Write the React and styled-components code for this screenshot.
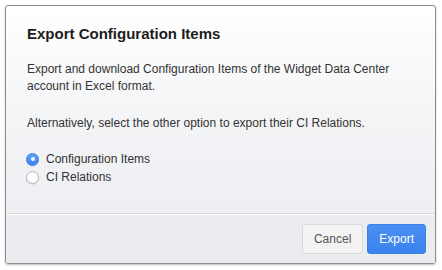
import React, { useState } from 'react';
import styled, { createGlobalStyle } from 'styled-components';

const GlobalStyle = createGlobalStyle`
  html, body {
    margin: 0;
    padding: 0;
    background: #ffffff;
  }
  body {
    font-family: "Liberation Sans", Arial, Helvetica, sans-serif;
    -webkit-font-smoothing: antialiased;
  }
`;

const Page = styled.div`
  padding: 5px 6px 6px 5px;
  width: 442px;
  height: 270px;
  box-sizing: border-box;
`;

const Dialog = styled.div`
  display: flex;
  flex-direction: column;
  height: 259px;
  box-sizing: border-box;
  border: 1px solid #8d8d8d;
  border-radius: 3px;
  background: linear-gradient(to bottom, #ffffff 0%, #f3f4f6 45%, #ebecf0 100%);
  box-shadow: 0 1px 2px rgba(0, 0, 0, 0.25);
  overflow: hidden;
`;

const Body = styled.div`
  flex: 1;
  padding: 18px 21px 0 21px;
  color: #333;
`;

const Title = styled.h2`
  margin: 0 0 17px;
  font-size: 15px;
  font-weight: 700;
  line-height: 20px;
  color: #1c1c1c;
`;

const Paragraph = styled.p`
  margin: 0 0 20px;
  font-size: 12px;
  line-height: 17px;
  color: #333;
`;

const Options = styled.div`
  display: flex;
  flex-direction: column;
  gap: 4px;
`;

const Option = styled.label`
  display: flex;
  align-items: center;
  gap: 7px;
  font-size: 12px;
  line-height: 14px;
  color: #333;
  cursor: pointer;
`;

const Radio = styled.span`
  width: 13px;
  height: 13px;
  margin-left: -1px;
  border-radius: 50%;
  box-sizing: border-box;
  display: flex;
  align-items: center;
  justify-content: center;
  background: ${(p) => (p.checked ? 'linear-gradient(#5ea1f7, #3a82ef)' : '#fff')};
  border: 1px solid ${(p) => (p.checked ? '#3a7de6' : '#b3b3b3')};
  box-shadow: 0 1px 1px rgba(0, 0, 0, 0.08);

  &::after {
    content: '';
    display: ${(p) => (p.checked ? 'block' : 'none')};
    width: 4px;
    height: 4px;
    border-radius: 50%;
    background: #fff;
  }
`;

const Footer = styled.div`
  display: flex;
  justify-content: flex-end;
  gap: 4px;
  padding: 10px 9px 9px;
  border-top: 1px solid #d7d8dc;
  box-shadow: inset 0 1px 0 #ffffff;
  background: #ebecf0;
`;

const Button = styled.button`
  height: 30px;
  padding: 0 11px;
  border-radius: 3px;
  font-family: inherit;
  font-size: 12px;
  cursor: pointer;
  color: ${(p) => (p.primary ? '#fff' : '#555')};
  background: ${(p) => (p.primary ? 'linear-gradient(#4b8ff3, #3b82ee)' : '#f3f3f3')};
  border: 1px solid ${(p) => (p.primary ? '#3b7fe6' : '#d9d9d9')};
`;

export default function App() {
  const [choice, setChoice] = useState('items');

  return (
    <Page>
      <GlobalStyle />
      <Dialog>
        <Body>
          <Title>Export Configuration Items</Title>
          <Paragraph>
            Export and download Configuration Items of the Widget Data Center
            account in Excel format.
          </Paragraph>
          <Paragraph>
            Alternatively, select the other option to export their CI Relations.
          </Paragraph>
          <Options>
            <Option onClick={() => setChoice('items')}>
              <Radio checked={choice === 'items'} />
              Configuration Items
            </Option>
            <Option onClick={() => setChoice('relations')}>
              <Radio checked={choice === 'relations'} />
              CI Relations
            </Option>
          </Options>
        </Body>
        <Footer>
          <Button>Cancel</Button>
          <Button primary>Export</Button>
        </Footer>
      </Dialog>
    </Page>
  );
}
